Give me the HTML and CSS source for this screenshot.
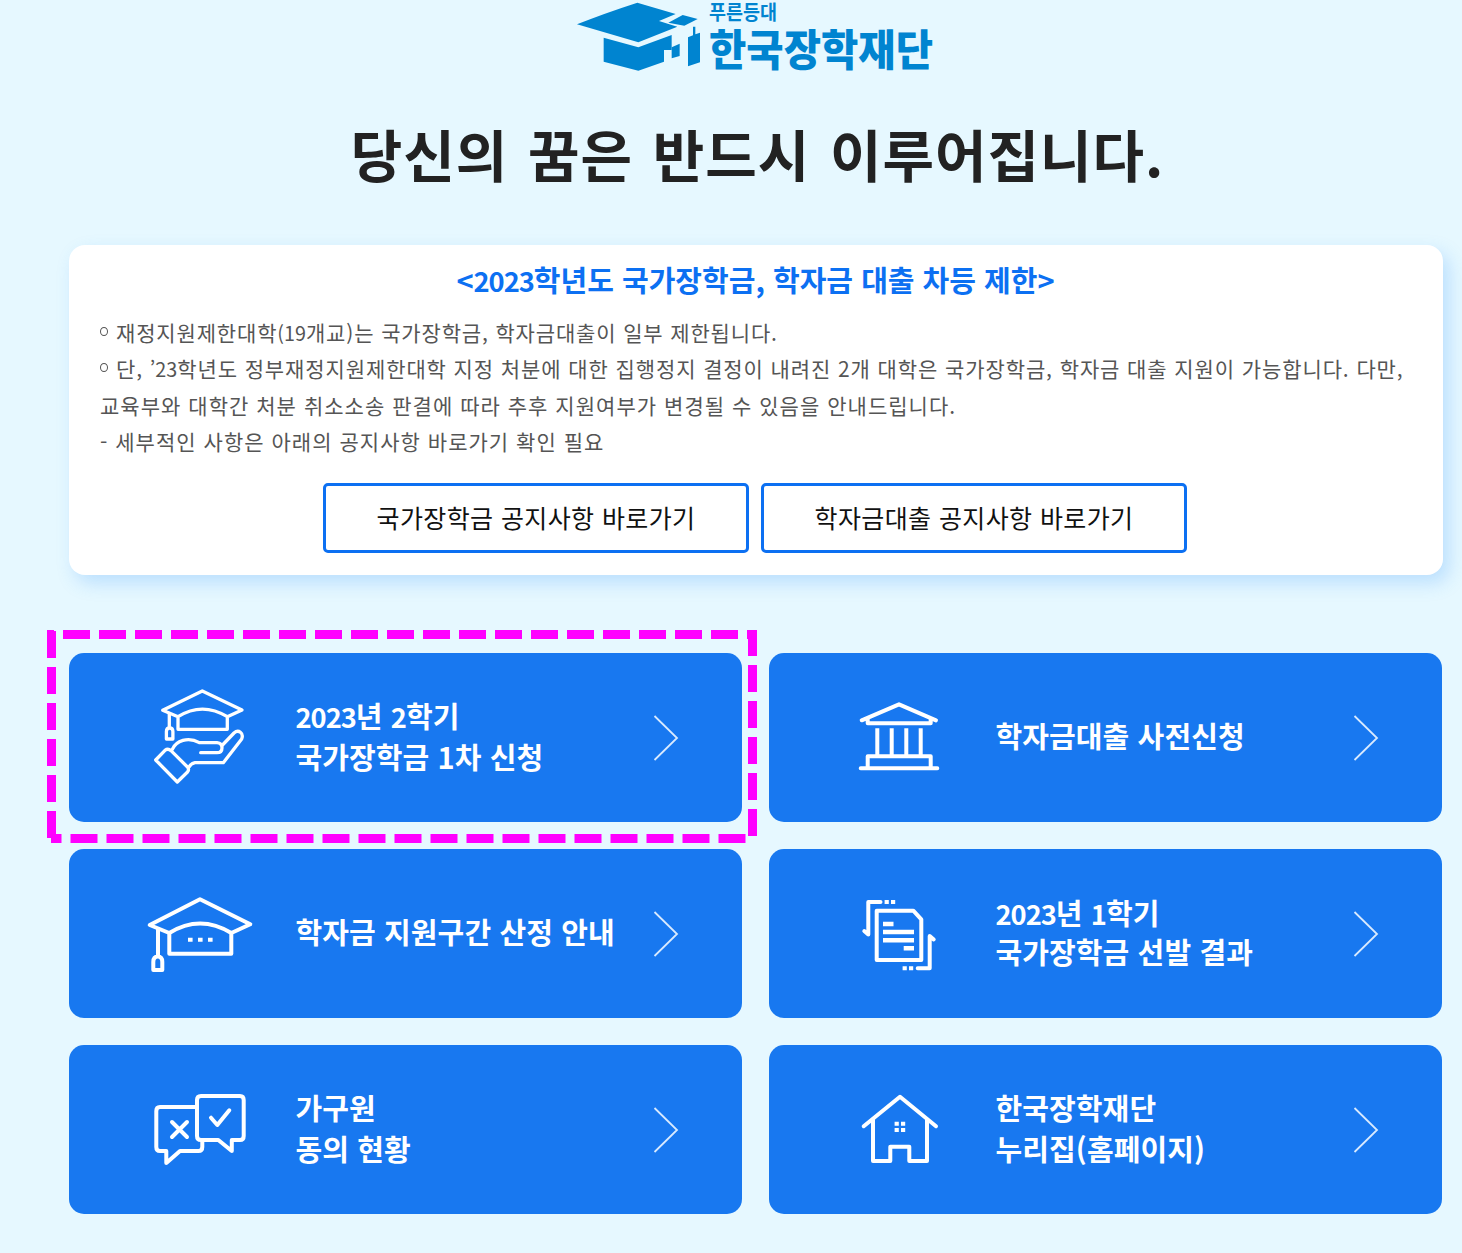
FILE: index.html
```
<!DOCTYPE html>
<html lang="ko">
<head>
  <meta charset="UTF-8" />
  <title>한국장학재단</title>
  <link rel="stylesheet" href="styles.css">
</head>
<body>

<header class="header">
  <svg class="logo" viewBox="0 0 374 90" role="img" aria-label="한국장학재단">
    <g transform="scale(.33333)">
      <path d="M24 73 Q100 42 205 8 L320 42 L270 63 L325 80 L208 127 Z" />
      <path d="M298 68 L341 45 L386 57 L346 77 Z" />
      <path d="M104 113 L208 142 L308 105 V150 L285 150 V185 L208 212 L104 185 Z" />
      <path d="M308 142 L332 131 V168 L308 175 Z" />
      <path d="M372 80 H379 V103 L393 98 V187 L357 199 V112 L372 106 Z" />
    </g>
    <text class="logo-sub" x="140" y="20" textLength="68" lengthAdjust="spacingAndGlyphs">푸른등대</text>
    <text class="logo-name" x="140" y="66" textLength="224" lengthAdjust="spacingAndGlyphs">한국장학재단</text>
  </svg>
  <h1 class="slogan">당신의 꿈은 반드시 이루어집니다.</h1>
</header>

<main class="content">
  <section class="notice">
    <h2 class="notice-title">&lt;<span class="num">2023</span>학년도 국가장학금, 학자금 대출 차등 제한&gt;</h2>
    <div class="notice-text">
      <p class="line1"><i class="dot"></i>재정지원제한대학<span class="num">(19</span>개교)는 국가장학금, 학자금대출이 일부 제한됩니다.</p>
      <p class="line2"><i class="dot"></i>단, <span class="num">’23</span>학년도 정부재정지원제한대학 지정 처분에 대한 집행정지 결정이 내려진 2개 대학은 국가장학금, 학자금 대출 지원이 가능합니다. 다만,</p>
      <p class="line3">교육부와 대학간 처분 취소소송 판결에 따라 추후 지원여부가 변경될 수 있음을 안내드립니다.</p>
      <p class="line3">- 세부적인 사항은 아래의 공지사항 바로가기 확인 필요</p>
    </div>
    <div class="notice-links">
      <a class="notice-btn">국가장학금 공지사항 바로가기</a>
      <a class="notice-btn">학자금대출 공지사항 바로가기</a>
    </div>
  </section>

  <nav class="tiles">
    <a class="tile">
      <svg class="icon thin" viewBox="0 0 130 110">
        <path d="M43 33.7 L27.7 27.3 L67.3 8 L107 27 L92.3 33.7 M43 33.7 Q67.3 18.5 92.3 33.7 V46.3 H43 Z" />
        <path d="M34.3 30.5 V45 M31.4 56 V48.5 Q31.4 45 34.6 45 Q37.9 45 37.9 48.5 V56 Z" />
        <path d="M20.7 77 L30 67.3 Q33 65 36 67.7 L52.5 84 Q54.5 86.5 52.5 89 L42.3 99 Z" />
        <path d="M37.3 66.3 C41 58 53 53 64.3 59.7 H82 Q87 60.2 87 64.7 Q87 69.7 82 69.7 H65.7" />
        <path d="M87.5 62 L99 50 C103.5 46 109 50 106.7 56 L88.3 79.7 H60 Q56 80.5 53.7 84.3" />
      </svg>
      <span class="label"><span class="num">2023</span>년 <span class="num">2</span>학기<br>국가장학금 1차 신청</span>
      <svg class="arrow" viewBox="0 0 26 48"><path d="M1.5 2 L24 24 L1.5 46" /></svg>
    </a>
    <a class="tile">
      <svg class="icon" viewBox="0 0 130 110">
        <path d="M26.7 37.3 L64 21.3 L101 37.3 M32.7 36 V40.3 H95.7 V36" />
        <path d="M32.7 85.3 V73.3 H95.7 V85.3 M25.7 85.3 H102.3" />
        <path class="butt" d="M42.3 45.3 V73 M56.7 45.3 V73 M71.3 45.3 V73 M85.7 45.3 V73" />
      </svg>
      <span class="label">학자금대출 사전신청</span>
      <svg class="arrow" viewBox="0 0 26 48"><path d="M1.5 2 L24 24 L1.5 46" /></svg>
    </a>
    <a class="tile">
      <svg class="icon" viewBox="0 0 130 110">
        <path d="M34.3 54 L14.7 46 L65 20.3 L115.3 45.3 L96.3 54 M34.3 54 Q65 35 96.3 54 V74.7 H34.3 Z" />
        <path d="M23 50.3 V77 M18.3 91 V83 Q18.3 77.5 22.8 77.5 Q27.3 77.5 27.3 83 V91 Z" />
        <path class="butt" stroke-dasharray="4.6 5.4" d="M53 60.7 H78" />
      </svg>
      <span class="label">학자금 지원구간 산정 안내</span>
      <svg class="arrow" viewBox="0 0 26 48"><path d="M1.5 2 L24 24 L1.5 46" /></svg>
    </a>
    <a class="tile">
      <svg class="icon" viewBox="0 0 130 110">
        <path d="M41.7 81 V31.7 H78.3 L86.3 40.3 V81 Z" />
        <path class="butt wide" d="M48 45 H58.5 M48 53 H79 M48 61.3 H79 M68.7 69.3 H79" />
        <path d="M45.5 23 H33.3 V55.5 L29.3 52" />
        <path d="M82.7 89.3 H94.7 V57 L98.7 60.5" />
        <path class="butt" d="M49.6 23 H53.8 M56 23 H60.2 M67.6 89.3 H71.8 M74 89.3 H78.2" />
      </svg>
      <span class="label tight"><span class="num">2023</span>년 <span class="num">1</span>학기<br>국가장학금 선발 결과</span>
      <svg class="arrow" viewBox="0 0 26 48"><path d="M1.5 2 L24 24 L1.5 46" /></svg>
    </a>
    <a class="tile">
      <svg class="icon" viewBox="0 0 130 110">
        <path d="M66 21 H105 Q108.7 21 108.7 25 V61 Q108.7 65 105 65 H96.8 V76 L83.3 65 H66 Q62 65 62 61 V25 Q62 21 66 21 Z" />
        <path d="M61 32 H25 Q21.3 32 21.3 36 V72 Q21.3 76 25 76 H31.3 V88 L45 76 H63.5 Q67.3 76 67.3 72 V66" />
        <path d="M37 47 L52 62 M52 47 L37 62 M76 42.7 L82.3 50 L94.3 35.3" />
      </svg>
      <span class="label">가구원<br>동의 현황</span>
      <svg class="arrow" viewBox="0 0 26 48"><path d="M1.5 2 L24 24 L1.5 46" /></svg>
    </a>
    <a class="tile">
      <svg class="icon" viewBox="0 0 130 110">
        <path d="M28.7 51.2 L65 21.7 L101 51.2" />
        <path d="M38 45 V86 H55.3 V71.7 H74.3 V86 H92 V45" />
        <path class="butt" d="M59.6 48.7 H63.8 M66 48.7 H70.2 M59.6 55 H63.8 M66 55 H70.2" />
      </svg>
      <span class="label">한국장학재단<br>누리집(홈페이지)</span>
      <svg class="arrow" viewBox="0 0 26 48"><path d="M1.5 2 L24 24 L1.5 46" /></svg>
    </a>

    <!-- dashed marker over the first tile -->
    <svg class="marker" viewBox="0 0 710 213">
      <path stroke-dashoffset="20" d="M0 4.5 H710" />
      <path stroke-dashoffset="1" d="M705.5 0 V207" />
      <path stroke-dashoffset="16.5" d="M4 208.5 H699" />
      <path d="M4.5 1 V208" />
    </svg>
  </nav>
</main>

</body>
</html>
```
FILE: styles.css
```
* { box-sizing: border-box; }
body {
  margin: 0;
  height: 1253px;
  overflow: hidden;
  background-color: #e6f8ff;
  color: #222;
  font-family: 'Noto Sans CJK KR', sans-serif;
}
h1, h2, p { margin: 0; }
.header {
  display: flex;
  flex-direction: column;
  align-items: center;
  height: 245px;
  padding-left: 53px;
}
.logo {
  width: 374px;
  height: 90px;
  margin-right: 3px;
  overflow: visible;
  fill: #0084d0;
}
.logo-sub {
  font-size: 20px;
  font-weight: 700;
}
.logo-name {
  font-size: 43px;
  font-weight: 900;
}
.slogan {
  margin-top: 23px;
  line-height: 80px;
  font-size: 56px;
  font-weight: 700;
  letter-spacing: 1px;
  word-spacing: 3px;
  white-space: nowrap;
}
.content {
  width: 1374px;
  margin-left: 69px;
}
.notice {
  height: 330px;
  padding: 14px 32px 0 31px;
  border-radius: 16px;
  background-color: #fff;
  box-shadow: 6px 8px 18px rgba(60, 150, 250, 0.25);
}
.num {
  font-size: 0.94em;
  line-height: 1;
  letter-spacing: -1px;
}
.notice-title {
  text-align: center;
  line-height: 40px;
  font-size: 29px;
  font-weight: 700;
  color: #0c70f2;
  white-space: nowrap;
}
.notice-text {
  margin-top: 15px;
  font-size: 21px;
  line-height: 36.4px;
  color: #555;
  white-space: nowrap;
}
.notice-text .num { letter-spacing: 0; }
.line1 { letter-spacing: 0.85px; }
.line2 { letter-spacing: 0.9px; }
.line3 { letter-spacing: 1.03px; }
.dot {
  display: inline-block;
  width: 8px;
  height: 9px;
  margin-right: 8px;
  border: 1.8px solid #555;
  border-radius: 50%;
  vertical-align: 5px;
}
.notice-links {
  display: flex;
  justify-content: center;
  gap: 12px;
  margin: 23px 1px 0 0;
}
.notice-btn {
  width: 426px;
  height: 70px;
  border: 3px solid #0c70f2;
  border-radius: 5px;
  line-height: 63px;
  text-align: center;
  font-size: 25px;
  letter-spacing: 0.4px;
  color: #111;
  white-space: nowrap;
}
.tiles {
  position: relative;
  display: grid;
  grid-template-columns: 673px 673px;
  grid-auto-rows: 168.5px;
  gap: 27.5px 27px;
  margin-top: 78.4px;
}
.tile {
  display: flex;
  align-items: center;
  padding: 0 63px 0 66px;
  border-radius: 15px;
  background-color: #1878f0;
  color: #fff;
}
.icon {
  width: 130px;
  height: 110px;
  margin-right: 30.5px;
  fill: none;
  stroke: #fff;
  stroke-width: 4;
  stroke-linecap: round;
  stroke-linejoin: round;
}
.thin { stroke-width: 3.3; }
.butt { stroke-linecap: butt; }
.wide { stroke-width: 4.6; }
.label {
  padding-bottom: 4px;
  font-size: 29px;
  font-weight: 700;
  line-height: 40.5px;
  letter-spacing: 0.1px;
  white-space: nowrap;
}
.tight { line-height: 39px; }
.arrow {
  width: 26px;
  height: 48px;
  margin-left: auto;
  fill: none;
  stroke: #d8eaff;
  stroke-width: 1.8;
}
.marker {
  position: absolute;
  left: -22px;
  top: -23.4px;
  width: 710px;
  height: 213px;
  fill: none;
  stroke: #f0f;
  stroke-width: 9;
  stroke-dasharray: 27 9;
}
```
